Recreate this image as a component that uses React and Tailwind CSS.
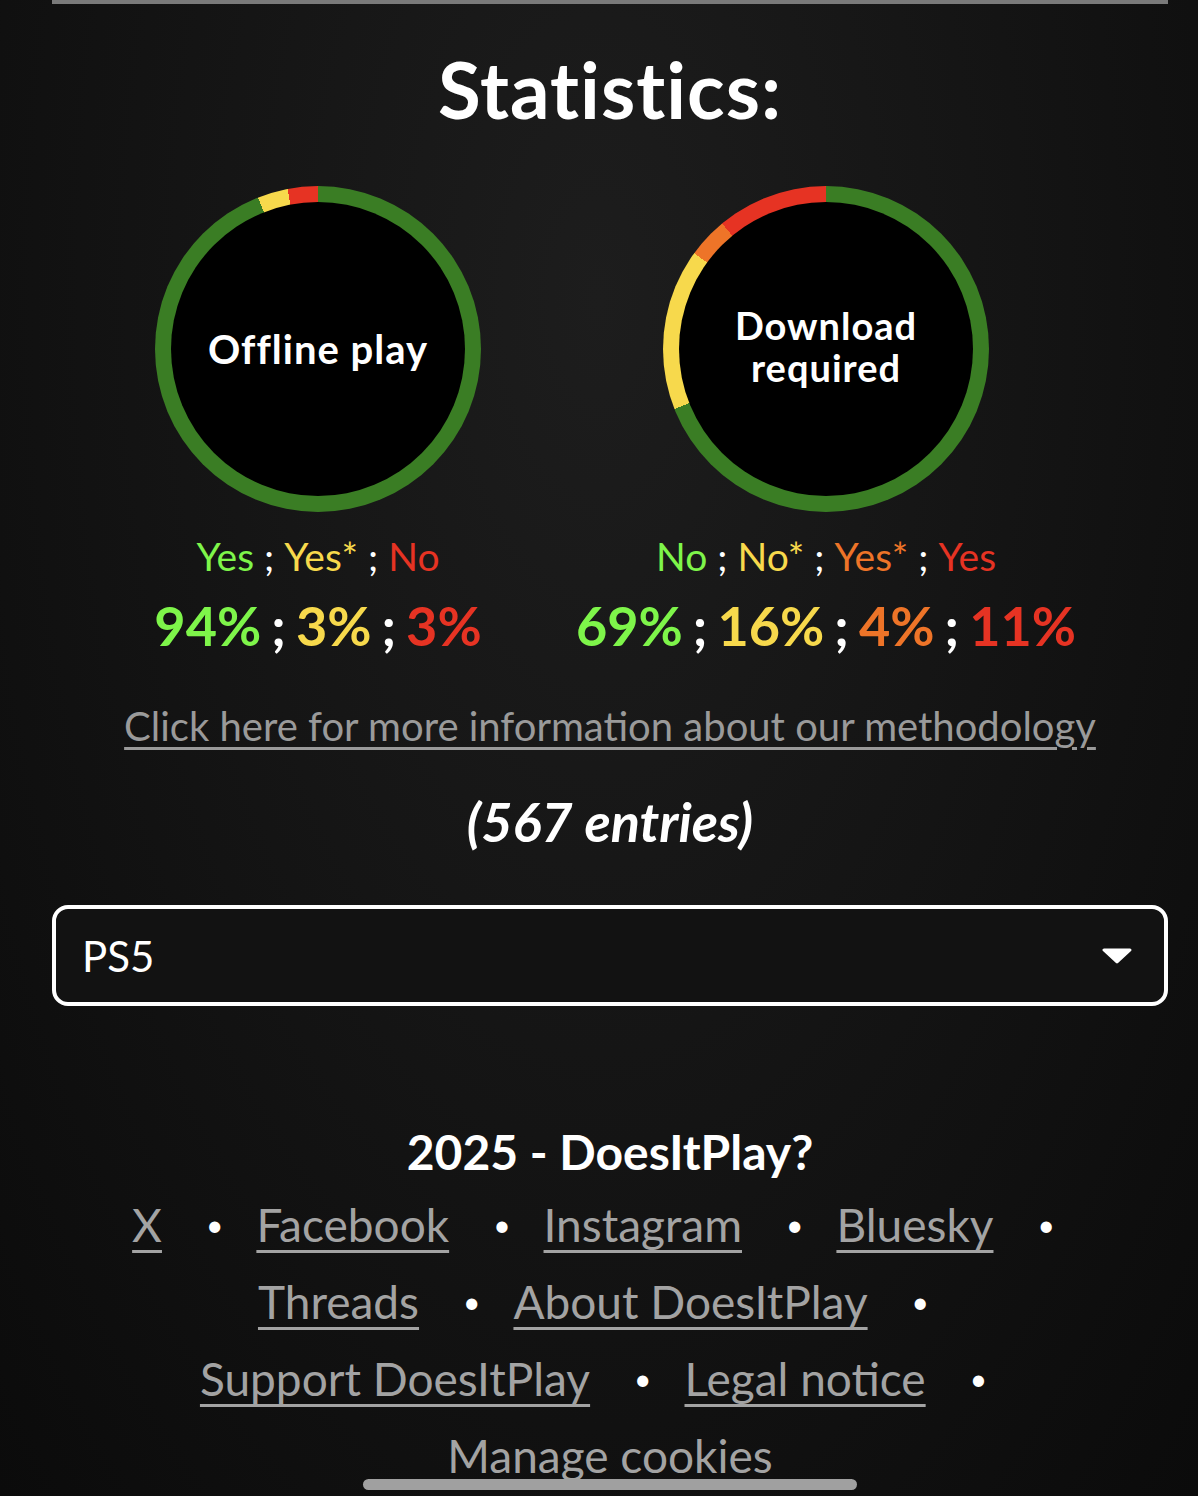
import React from 'react';

const font = { fontFamily: 'Lato, "Noto Sans", sans-serif' };

const Donut = ({ ringClass, children }) => (
  <div className={`w-[326px] h-[326px] rounded-full p-[16px] ${ringClass}`}>
    <div className="w-full h-full rounded-full bg-black flex items-center justify-center text-center">
      {children}
    </div>
  </div>
);

const Sep = () => <span className="text-white mx-[10px]">;</span>;

const Bullet = () => <span className="text-white text-[30px] ml-[44px] mr-[33px]">•</span>;

const FLink = ({ children }) => (
  <a href="#" className="text-[#a3a3a3] underline underline-offset-[8px] decoration-[3px]">
    {children}
  </a>
);

const App = () => {
  return (
    <div
      className="relative h-[1496px] w-full bg-[radial-gradient(ellipse_at_50%_20%,#1d1d1d,#0b0b0b)] text-white overflow-hidden"
      style={font}
    >
      <div className="ml-[52px] mr-[30px] h-[4px] bg-[#7a7a7a]" />

      <div className="ml-[52px] mr-[30px]">
        <h1 className="text-center text-[78px] font-bold leading-none mt-[46px] tracking-[1px]">Statistics:</h1>
      </div>

      <div className="flex mt-[58px] pl-[155px]">
        <Donut ringClass="bg-[conic-gradient(#3a7d24_0_94%,#f7d94c_94%_97%,#e63323_97%_100%)]">
          <span className="text-[40px] font-bold tracking-[1px]">Offline play</span>
        </Donut>
        <div className="ml-[182px]">
          <Donut ringClass="bg-[conic-gradient(#3a7d24_0_69%,#f7d94c_69%_85%,#ee7428_85%_89%,#e63323_89%_100%)]">
            <div className="text-[38px] font-bold tracking-[1px] -mt-[6px] flex flex-col items-center">
              <span className="leading-[46px]">Download</span>
              <span className="leading-[46px] -mt-[4px]">required</span>
            </div>
          </Donut>
        </div>
      </div>

      <div className="flex mt-[22px]">
        <div className="w-[636px] flex flex-col items-center">
          <div className="text-[39px] leading-[44px] whitespace-nowrap">
            <span className="text-[#7ef54a]">Yes</span>
            <Sep />
            <span className="text-[#f7d94c]">Yes*</span>
            <Sep />
            <span className="text-[#e63323]">No</span>
          </div>
          <div className="text-[54px] font-bold leading-[60px] mt-[18px] whitespace-nowrap">
            <span className="text-[#7ef54a]">94%</span>
            <Sep />
            <span className="text-[#f7d94c]">3%</span>
            <Sep />
            <span className="text-[#e63323]">3%</span>
          </div>
        </div>
        <div className="w-[380px] flex flex-col items-center">
          <div className="text-[39px] leading-[44px] whitespace-nowrap">
            <span className="text-[#7ef54a]">No</span>
            <Sep />
            <span className="text-[#f7d94c]">No*</span>
            <Sep />
            <span className="text-[#ee7428]">Yes*</span>
            <Sep />
            <span className="text-[#e63323]">Yes</span>
          </div>
          <div className="text-[54px] font-bold leading-[60px] mt-[18px] whitespace-nowrap">
            <span className="text-[#7ef54a]">69%</span>
            <Sep />
            <span className="text-[#f7d94c]">16%</span>
            <Sep />
            <span className="text-[#ee7428]">4%</span>
            <Sep />
            <span className="text-[#e63323]">11%</span>
          </div>
        </div>
      </div>

      <div className="ml-[52px] mr-[30px]">
        <div className="text-center mt-[48px]">
          <a href="#" className="text-[40px] text-[#9a9a9a] underline underline-offset-[6px] decoration-[3px] leading-[44px] whitespace-nowrap">
            Click here for more information about our methodology
          </a>
        </div>

        <div className="text-center text-[54px] font-bold italic mt-[44px] leading-[60px]">(567 entries)</div>

        <div className="mt-[53px] h-[101px] rounded-[16px] border-[4px] border-white bg-[#121212] flex items-center justify-between pl-[26px] pr-[32px]">
          <span className="text-[42px] leading-none">PS5</span>
          <svg width="30" height="16" viewBox="0 0 30 16">
            <path d="M2 2 L28 2 L15 14 Z" fill="white" stroke="white" strokeWidth="3" strokeLinejoin="round" />
          </svg>
        </div>

        <div className="text-center mt-[120px] text-[48px] font-bold leading-[52px]">2025 - DoesItPlay?</div>

        <div className="flex flex-col items-center text-[46px] leading-[77px] mt-[8px]">
          <div className="flex items-center whitespace-nowrap">
            <FLink>X</FLink><Bullet /><FLink>Facebook</FLink><Bullet /><FLink>Instagram</FLink><Bullet /><FLink>Bluesky</FLink><Bullet />
          </div>
          <div className="flex items-center whitespace-nowrap">
            <FLink>Threads</FLink><Bullet /><FLink>About DoesItPlay</FLink><Bullet />
          </div>
          <div className="flex items-center whitespace-nowrap">
            <FLink>Support DoesItPlay</FLink><Bullet /><FLink>Legal notice</FLink><Bullet />
          </div>
          <div className="flex items-center whitespace-nowrap">
            <FLink>Manage cookies</FLink>
          </div>
        </div>
      </div>

      <div className="absolute left-[363px] top-[1479px] w-[494px] h-[11px] rounded-full bg-[#a0a0a0]" />
    </div>
  );
};

export default App;
